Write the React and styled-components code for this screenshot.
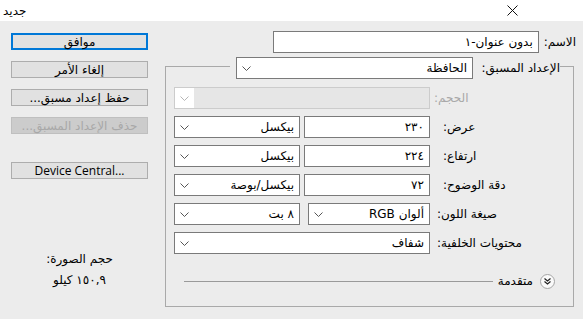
import React from 'react';
import styled, { createGlobalStyle } from 'styled-components';

const GlobalStyle = createGlobalStyle`
  html, body {
    margin: 0;
    padding: 0;
    background: #ececec;
  }
  * {
    box-sizing: border-box;
  }
`;

const FONT = `"DejaVu Sans", "Noto Sans", sans-serif`;

const Chevron = ({ color = '#555' }) => (
  <svg width="9" height="5" viewBox="0 0 9 5">
    <path d="M0.5 0.5 L4.5 4.5 L8.5 0.5" fill="none" stroke={color} strokeWidth="1" />
  </svg>
);

const CloseIcon = () => (
  <svg width="11" height="11" viewBox="0 0 11 11">
    <path d="M0.5 0.5 L10.5 10.5 M10.5 0.5 L0.5 10.5" stroke="#111" strokeWidth="1" />
  </svg>
);

const DoubleChevron = () => (
  <svg width="7" height="7" viewBox="0 0 7 7">
    <path d="M0.5 0.5 L3.5 3 L6.5 0.5 M0.5 3.5 L3.5 6 L6.5 3.5" fill="none" stroke="#222" strokeWidth="1.2" />
  </svg>
);

export default function App() {
  return (
    <>
      <GlobalStyle />
      <Window>
        <TitleBar>
          <Title>جديد</Title>
          <CloseButton>
            <CloseIcon />
          </CloseButton>
        </TitleBar>
        <Body>
          <Sidebar>
            <Button $primary>موافق</Button>
            <Button>إلغاء الأمر</Button>
            <Button>حفظ إعداد مسبق...</Button>
            <Button disabled>حذف الإعداد المسبق...</Button>
            <Button $latin $space={28}>Device Central...</Button>
            <SizeInfo>
              <div>حجم الصورة:</div>
              <SizeValue>١٥٠,٩ كيلو</SizeValue>
            </SizeInfo>
          </Sidebar>

          <Main>
            <NameRow>
              <Label>الاسم:</Label>
              <TextBox $width={266}>بدون عنوان-١</TextBox>
            </NameRow>

            <Group>
              <Legend>
                <Label $width={84}>الإعداد المسبق:</Label>
                <Select width={237} value="الحافظة" />
              </Legend>

              <Rows>
                <Row>
                  <Select width={256} disabled />
                  <Label $offset={4} $muted>الحجم:</Label>
                </Row>
                <Row>
                  <Controls>
                    <Select width={126} value="بيكسل" />
                    <TextBox $width={126}>٢٣٠</TextBox>
                  </Controls>
                  <Label $offset={13}>عرض:</Label>
                </Row>
                <Row>
                  <Controls>
                    <Select width={126} value="بيكسل" />
                    <TextBox $width={126}>٢٢٤</TextBox>
                  </Controls>
                  <Label $offset={13}>ارتفاع:</Label>
                </Row>
                <Row>
                  <Controls>
                    <Select width={126} value="بيكسل/بوصة" />
                    <TextBox $width={126}>٧٢</TextBox>
                  </Controls>
                  <Label $offset={13}>دقة الوضوح:</Label>
                </Row>
                <Row>
                  <Controls>
                    <Select width={126} value="٨ بت" />
                    <Select width={122} value="ألوان RGB" />
                  </Controls>
                  <Label $offset={7}>صيغة اللون:</Label>
                </Row>
                <Row>
                  <Select width={256} value="شفاف" />
                  <Label $offset={7}>محتويات الخلفية:</Label>
                </Row>
              </Rows>

              <AdvancedRow>
                <Rule />
                <AdvancedText>متقدمة</AdvancedText>
                <RoundButton>
                  <DoubleChevron />
                </RoundButton>
              </AdvancedRow>
            </Group>
          </Main>
        </Body>
      </Window>
    </>
  );
}

const Select = ({ width, value, disabled }) => (
  <SelectBox $width={width} $disabled={disabled}>
    <Arrow>
      <Chevron color={disabled ? '#b5b5b5' : '#555'} />
    </Arrow>
    <SelectText>{value}</SelectText>
  </SelectBox>
);

const Window = styled.div`
  width: 583px;
  height: 319px;
  display: flex;
  flex-direction: column;
  background: #ececec;
  font-family: ${FONT};
  font-size: 12px;
  color: #000;
  overflow: hidden;
`;

const TitleBar = styled.div`
  height: 21px;
  flex-shrink: 0;
  display: flex;
  align-items: center;
  justify-content: space-between;
  padding: 0 65px 0 3px;
  background: #fff;
`;

const Title = styled.span`
  direction: rtl;
  font-size: 12px;
`;

const CloseButton = styled.span`
  display: flex;
  align-items: center;
`;

const Body = styled.div`
  flex: 1;
  display: flex;
  direction: ltr;
`;

const Sidebar = styled.div`
  width: 137px;
  margin: 12px 0 0 11px;
  display: flex;
  flex-direction: column;
  gap: 11px;
`;

const Button = styled.button`
  height: 17px;
  padding: 0;
  margin-top: ${p => (p.$space ? p.$space - 11 : 0)}px;
  direction: ${p => (p.$latin ? 'ltr' : 'rtl')};
  font-family: ${p => (p.$latin ? `"Open Sans", ${FONT}` : FONT)};
  font-size: 12px;
  line-height: 1;
  color: #000;
  background: #e1e1e1;
  border: ${p => (p.$primary ? '2px solid #0078d7' : '1px solid #adadad')};

  &:disabled {
    color: #a8a8a8;
    background: #cccccc;
    border-color: #bfbfbf;
  }
`;

const SizeInfo = styled.div`
  margin-top: 62px;
  direction: rtl;
  text-align: center;
  line-height: 14px;
`;

const SizeValue = styled.div`
  margin-top: 7px;
`;

const Main = styled.div`
  width: 411px;
  margin-left: 17px;
  display: flex;
  flex-direction: column;
`;

const NameRow = styled.div`
  height: 22px;
  margin-top: 10px;
  display: flex;
  direction: rtl;
  align-items: center;
  gap: 5px;
`;

const Label = styled.span`
  direction: rtl;
  white-space: nowrap;
  flex-shrink: 0;
  width: ${p => (p.$width ? `${p.$width}px` : 'auto')};
  margin-left: ${p => p.$offset || 0}px;
  color: ${p => (p.$muted ? '#a8a8a8' : '#000')};
`;

const TextBox = styled.div`
  width: ${p => p.$width}px;
  height: 22px;
  flex-shrink: 0;
  display: flex;
  align-items: center;
  justify-content: flex-start;
  direction: rtl;
  padding-right: 5px;
  background: #fff;
  border: 1px solid #7a7a7a;
`;

const Group = styled.fieldset`
  width: 409px;
  margin: 0 2px 0 0;
  padding: 0 13px 17px 8px;
  direction: rtl;
  border: 1px solid #a9a9a9;
  min-inline-size: 0;
`;

const Legend = styled.legend`
  padding: 4px 0 0 6px;
  display: flex;
  align-items: center;
  gap: 3px;
  direction: rtl;
`;

const Rows = styled.div`
  margin-top: 8px;
  display: flex;
  flex-direction: column;
  gap: 7px;
`;

const Row = styled.div`
  height: 22px;
  display: flex;
  align-items: center;
  direction: ltr;
`;

const Controls = styled.div`
  width: 256px;
  display: flex;
  justify-content: space-between;
`;

const SelectBox = styled.div`
  width: ${p => p.$width}px;
  height: 22px;
  flex-shrink: 0;
  display: flex;
  align-items: stretch;
  direction: ltr;
  background: ${p => (p.$disabled ? '#e6e6e6' : '#fff')};
  border: 1px solid ${p => (p.$disabled ? '#cccccc' : '#7a7a7a')};
`;

const Arrow = styled.span`
  width: 19px;
  display: flex;
  align-items: center;
  justify-content: center;
  background: #fff;
`;

const SelectText = styled.span`
  flex: 1;
  display: flex;
  align-items: center;
  direction: rtl;
  padding-right: 5px;
  white-space: nowrap;
`;

const AdvancedRow = styled.div`
  height: 16px;
  margin-top: 19px;
  padding-right: 5px;
  display: flex;
  align-items: center;
  direction: ltr;
`;

const Rule = styled.div`
  flex: 1;
  height: 1px;
  margin-left: 10px;
  background: #9a9a9a;
`;

const AdvancedText = styled.span`
  direction: rtl;
  margin: 0 7px 0 5px;
`;

const RoundButton = styled.span`
  width: 15px;
  height: 15px;
  display: flex;
  align-items: center;
  justify-content: center;
  border-radius: 50%;
  background: #fafafa;
  border: 1px solid #a5a5a5;
`;
